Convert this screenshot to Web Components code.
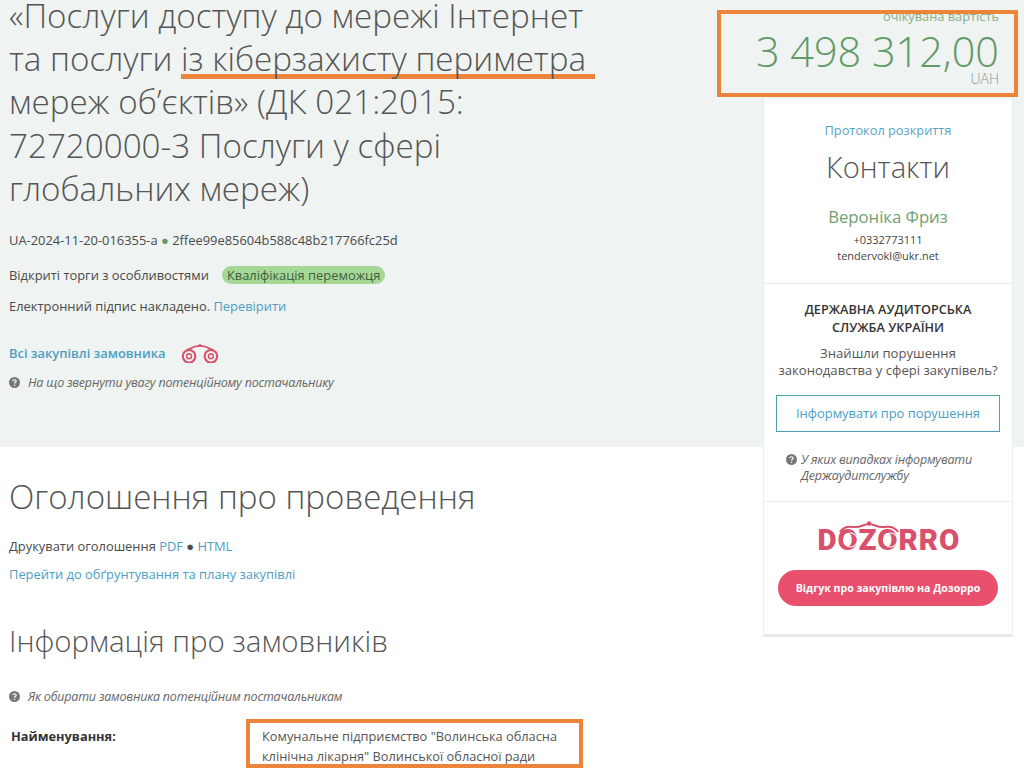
<!DOCTYPE html>
<html lang="uk"><head><meta charset="utf-8"><title>Тендер</title>
<style>
html,body{margin:0;padding:0;height:773px;overflow:hidden;background:#fff}
body{font-family:"Open Sans","Noto Sans",sans-serif;color:#4a4a4a}
</style></head><body>
<tender-page></tender-page>
<script>
function def(name, html){
  customElements.define(name, class extends HTMLElement{
    constructor(){super();this.attachShadow({mode:'open'}).innerHTML=html;}
  });
}
const binoc=(c,w)=>`<svg viewBox="0 0 40 22" width="${w}" fill="none" stroke="${c}" stroke-width="2.2" style="display:block">
<circle cx="8.5" cy="14" r="6.6"/><circle cx="8.5" cy="14" r="2.6" stroke-width="1.5"/>
<circle cx="31.5" cy="14" r="6.6"/><circle cx="31.5" cy="14" r="2.6" stroke-width="1.5"/>
<path d="M6 7.5 L14 4 Q20 2 26 4 L34 7.5" stroke-width="1.8"/><circle cx="20" cy="2.6" r="1.5" fill="${c}" stroke="none"/></svg>`;

def('hint-line',`<style>
:host{display:flex;align-items:flex-start;gap:8px;font:italic 400 12.5px/16px "Open Sans",sans-serif;color:#666;letter-spacing:-.2px}
svg{flex:none;margin-top:2px}
</style><svg width="11" height="11" viewBox="0 0 12 12"><circle cx="6" cy="6" r="6" fill="#777"/><path d="M4.2 4.6C4.3 3.5 5 3 6 3s1.8.6 1.8 1.5c0 1.3-1.7 1.3-1.7 2.6" fill="none" stroke="#fff" stroke-width="1.3"/><circle cx="6.1" cy="9" r=".8" fill="#fff"/></svg><span><slot></slot></span>`);

def('price-box',`<style>
:host{display:block;box-sizing:border-box;width:301px;height:87px;border:4px solid #ec8439;padding:0 15px 0 0;text-align:right;overflow:hidden;background:#eff3f1;position:relative;z-index:1}
.l{font:400 12.8px/14px "Open Sans",sans-serif;color:#86b086;margin-top:-5px}
.v{font:300 41.4px/40px "Open Sans",sans-serif;color:#5f9a68;margin-top:8px;white-space:nowrap}
.c{font:300 14px/14px "Open Sans",sans-serif;color:#84979c;margin-top:1px}
</style><div class="l">очікувана вартість</div><div class="v">3 498 312,00</div><div class="c">UAH</div>`);

def('audit-block',`<style>
:host{display:block;box-sizing:border-box;height:219px;padding:16px 12px 0;text-align:center;border-top:1px solid #ececec;border-bottom:1px solid #ececec}
.h{font:600 12.7px/18px "Open Sans",sans-serif;color:#333}
.p{font:400 13.1px/17px "Open Sans",sans-serif;color:#555;margin-top:9px}
.b{display:block;box-sizing:border-box;height:37px;border:1px solid #4f9fb2;font:400 12.9px/35px "Open Sans",sans-serif;color:#4ba0c4;margin-top:16px}
hint-line{text-align:left;margin:20px 0 0 10px;gap:4px}
</style><div class="h">ДЕРЖАВНА АУДИТОРСЬКА<br>СЛУЖБА УКРАЇНИ</div>
<div class="p">Знайшли порушення<br>законодавства у сфері закупівель?</div>
<div class="b">Інформувати про порушення</div>
<hint-line>У яких випадках інформувати<br>Держаудитслужбу</hint-line>`);

def('dozorro-block',`<style>
:host{display:block;box-sizing:border-box;padding:19px 14px 0;text-align:center;height:133px}
.logo{display:flex;justify-content:center;height:35px}
.in{position:relative;display:block;width:141px;height:35px;text-align:left}
.t{display:block;font:900 29.5px/35px Roboto,sans-serif;color:#d9506c;letter-spacing:1px;white-space:nowrap;padding-top:2px}
svg{position:absolute;left:0;top:0}
.btn{display:block;height:36px;border-radius:18px;background:#e8506d;color:#fff;font:700 10.6px/36px "Open Sans",sans-serif;margin-top:14px}
</style><div class="logo"><div class="in"><span class="t">DOZORRO</span>
<svg width="141" height="35" viewBox="0 0 141 35" fill="none" stroke="#d9506c" stroke-width="2"><path d="M22 11C25 6 30 5 36 6C42 7 46 3 51 3C56 3 60 7 66 6C72 5 77 6 80 11"/><circle cx="51" cy="2.5" r="2.2" fill="#d9506c" stroke="none"/><circle cx="32.5" cy="19" r="7" stroke="#fff" stroke-width="1.1"/><circle cx="72.5" cy="19" r="7" stroke="#fff" stroke-width="1.1"/></svg></div></div>
<div class="btn">Відгук про закупівлю на Дозорро</div>`);

def('side-card',`<style>
:host{display:block;box-sizing:border-box;width:250px;height:540px;margin-left:46px;background:#fff;border:1px solid #eceeed;border-bottom:3px solid #e8eaea}
.top{height:185px;box-sizing:border-box;padding-top:24px;text-align:center}
.pr{font:400 12.8px/17px "Open Sans",sans-serif;color:#5aa5c9}
.k{font:300 29.2px/38px "Open Sans",sans-serif;color:#555;margin-top:9px}
.n{font:400 16.7px/22px "Open Sans",sans-serif;color:#6f9f72;margin-top:20px}
.s{font:400 11px/16px "Open Sans",sans-serif;color:#444}
.ph{margin-top:4px}
</style><div class="top"><div class="pr">Протокол розкриття</div><div class="k">Контакти</div>
<div class="n">Вероніка Фриз</div><div class="s ph">+0332773111</div><div class="s">tendervokl@ukr.net</div></div>
<audit-block></audit-block><dozorro-block></dozorro-block>`);

def('tender-page',`<style>
:host{display:flex;height:773px;overflow:hidden;background:linear-gradient(#eff3f1 447px,#fff 447px);font:400 12.9px/16px "Open Sans",sans-serif;color:#4a4a4a}
main{width:717px;box-sizing:border-box;padding-left:9px;flex:none}
aside{width:307px;flex:none;padding-top:10px;box-sizing:border-box}
h1{font:300 33.2px/43.2px "Open Sans",sans-serif;color:#555;margin:-6px 0 0;white-space:nowrap}
h1 span{background:linear-gradient(#ec8439,#ec8439) no-repeat left bottom 2px/100% 5px;padding-right:9px}
h2{font:300 33.1px/44px "Open Sans",sans-serif;color:#555;margin:0}
h3{font:300 29.5px/38px "Open Sans",sans-serif;color:#555;margin:0}
a{color:#4ba0c4;text-decoration:none}
p{margin:0}
.id{margin-top:22px}
.dot{color:#5b9e68}
.tp{margin-top:17px;display:flex;align-items:center;height:20px}
.pill{background:#a4d894;color:#3f5f3f;border-radius:10px;padding:0 5px;margin-left:13px;line-height:18px;font-size:12.9px}
.sig{margin-top:13px}
.all{margin-top:29px;display:flex;align-items:center;height:20px;font-weight:600}
.all svg{margin-left:16px}
.q{margin-top:12px}
.annon{margin-top:84px}
.pr{margin-top:19px}
.gp{margin-top:12px}
.info{margin-top:40px}
.q2{margin-top:29px}
.row{display:grid;grid-template-columns:237px 337px;margin-top:14px}
.lb{font-weight:700;color:#333;padding:9px 0 0 2px;font-size:12.8px}
.vb{box-sizing:border-box;height:49px;border:4px solid #ec8439;padding:3px 0 0 12px;font:400 12.8px/20px "Open Sans",sans-serif;color:#555;background:#fff;white-space:nowrap}
</style>
<main>
<h1>«Послуги доступу до мережі Інтернет<br>та послуги <span>із кіберзахисту периметра</span><br>мереж об’єктів» (ДК 021:2015:<br>72720000-3 Послуги у сфері<br>глобальних мереж)</h1>
<p class="id">UA-2024-11-20-016355-a <span class="dot">●</span> 2ffee99e85604b588c48b217766fc25d</p>
<div class="tp">Відкриті торги з особливостями<span class="pill">Кваліфікація переможця</span></div>
<p class="sig">Електронний підпис накладено. <a>Перевірити</a></p>
<div class="all"><a>Всі закупівлі замовника</a>${binoc('#d9506c',38)}</div>
<hint-line class="q">На що звернути увагу потенційному постачальнику</hint-line>
<h2 class="annon">Оголошення про проведення</h2>
<p class="pr">Друкувати оголошення <a>PDF</a> ● <a>HTML</a></p>
<p class="gp"><a>Перейти до обґрунтування та плану закупівлі</a></p>
<h3 class="info">Інформація про замовників</h3>
<hint-line class="q2">Як обирати замовника потенційним постачальникам</hint-line>
<div class="row"><div class="lb">Найменування:</div><div class="vb">Комунальне підприємство "Волинська обласна<br>клінічна лікарня" Волинської обласної ради</div></div>
</main>
<aside><price-box></price-box><side-card></side-card></aside>`);
</script></body></html>
